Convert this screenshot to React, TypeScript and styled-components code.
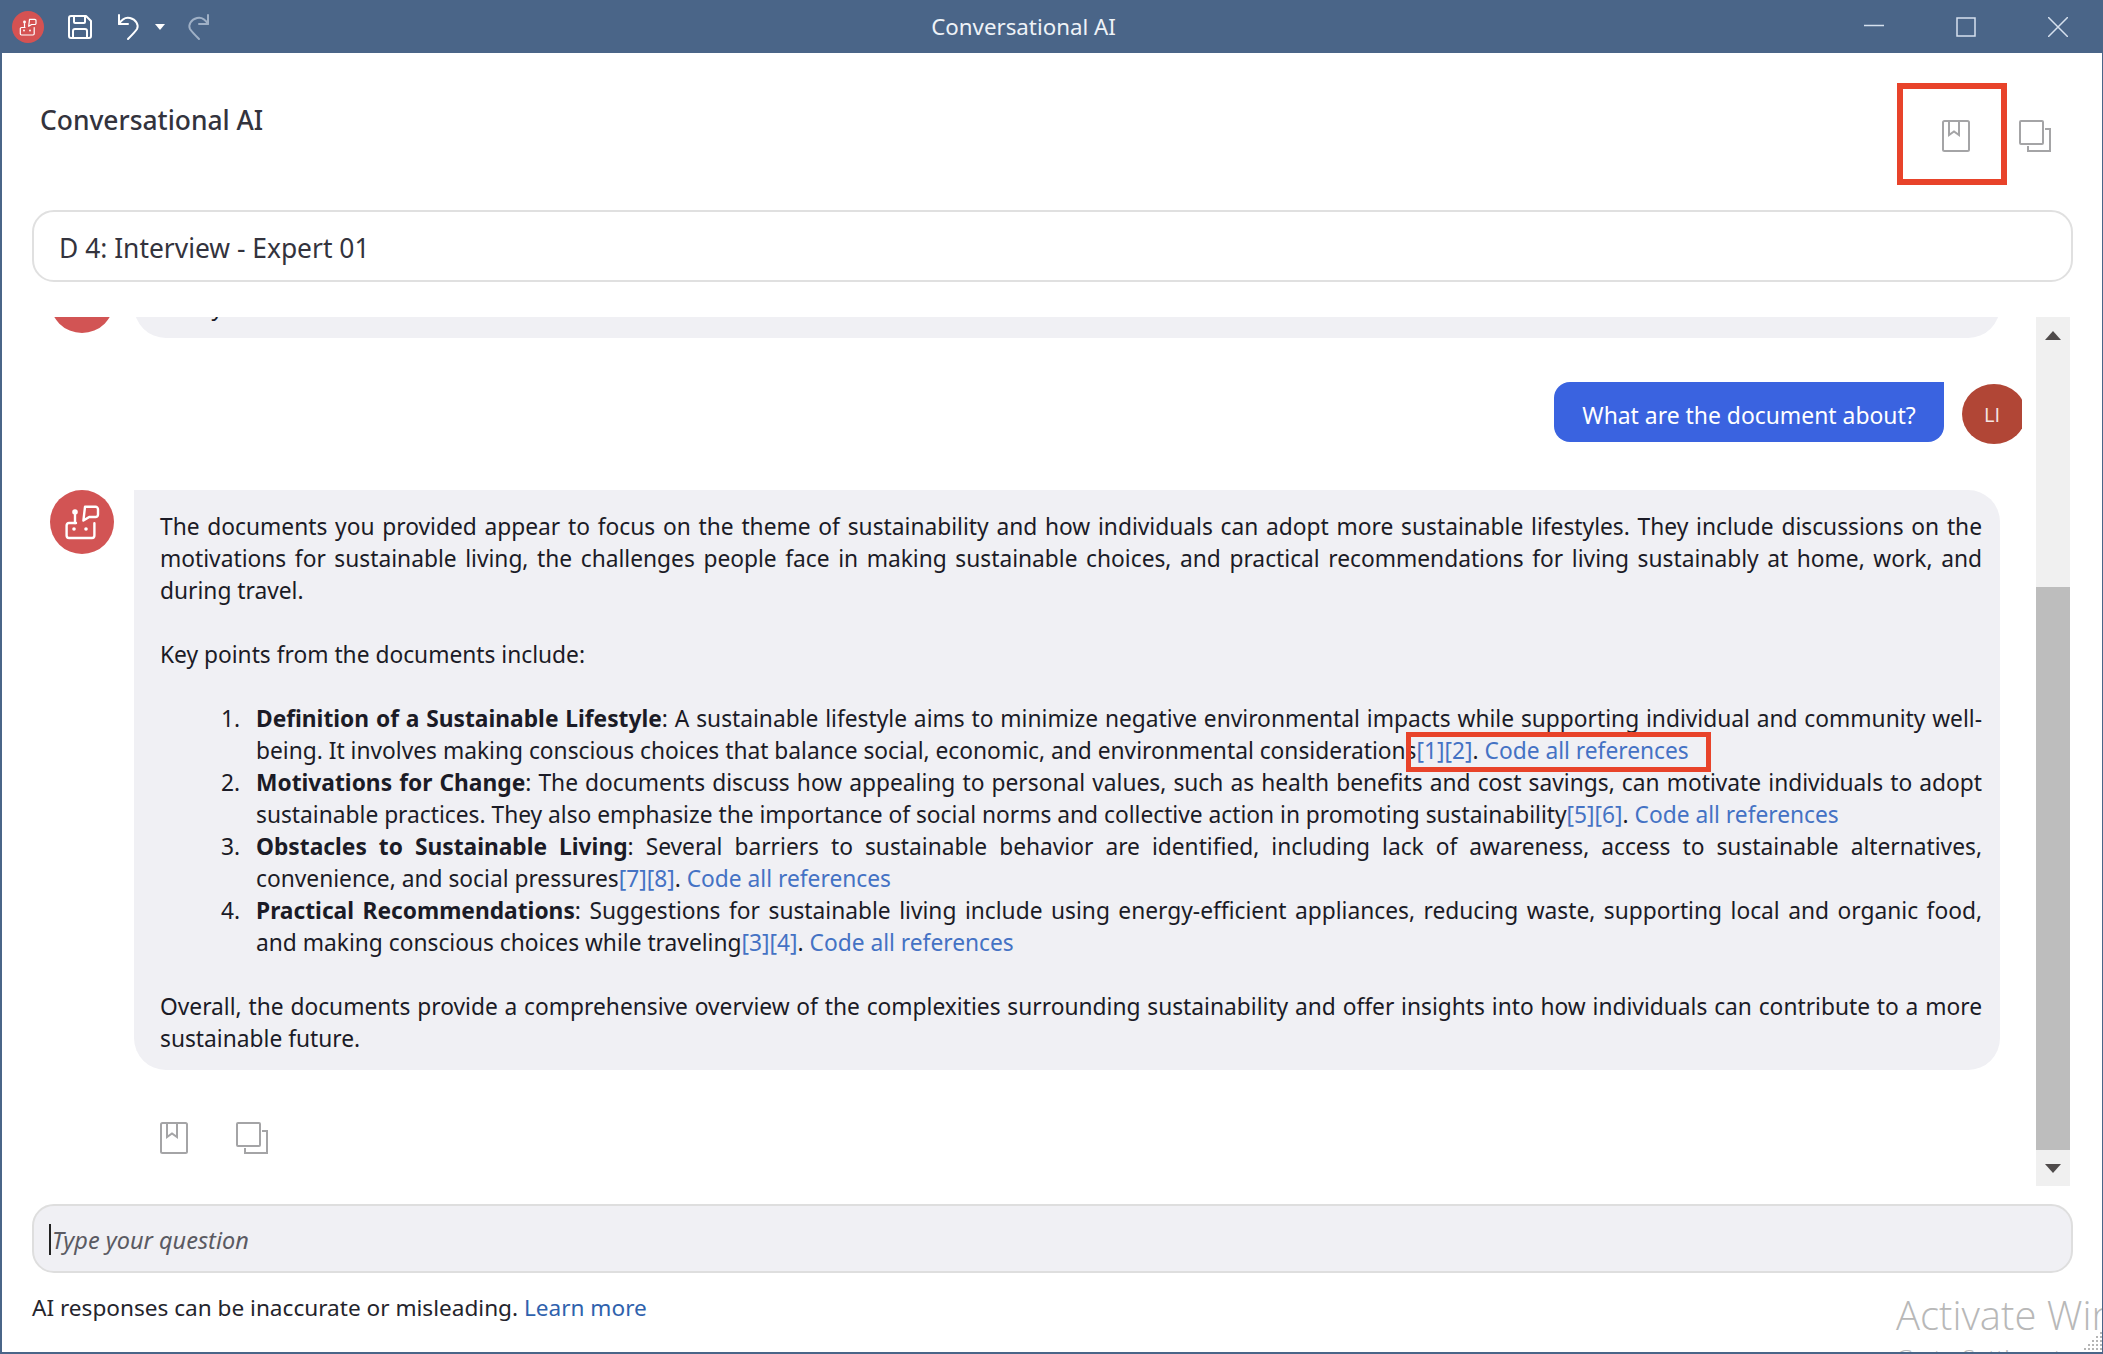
import * as React from 'react';
import styled, { createGlobalStyle } from 'styled-components';

const FONT = `'Noto Sans', 'Open Sans', sans-serif`;
const CHROME = '#4a6588';
const RED = '#e8432a';
const ICON_GREY = '#a4a4a6';

const GlobalStyle = createGlobalStyle`
  html, body { margin: 0; padding: 0; background: #fff; }
  body { font-family: ${FONT}; color: #1b1b26; }
`;

const Frame = styled.div`
  position: relative;
  width: 2103px;
  height: 1354px;
  box-sizing: border-box;
  border: 2px solid ${CHROME};
  border-top: 0;
  border-right-width: 1px;
  overflow: hidden;
  background: #fff;
  display: flex;
  flex-direction: column;
`;

const TitleBar = styled.header`
  height: 53px;
  flex: none;
  margin: 0 -1px 0 -2px;
  background: ${CHROME};
  display: grid;
  grid-template-columns: 1fr auto 1fr;
  align-items: center;
  color: #fff;
`;

const QuickTools = styled.div`
  display: flex;
  align-items: center;
  padding-left: 12px;
`;

const AppBadge = styled.div`
  width: 32px;
  height: 32px;
  border-radius: 50%;
  background: #d55252;
  margin-right: 23px;
`;

const WindowTitle = styled.div`
  font-size: 22.3px;
  color: #eef2f7;
  margin-right: 56px;
`;

const WindowControls = styled.div`
  display: flex;
  justify-content: flex-end;
  align-items: center;
  gap: 72px;
  padding-right: 35px;
`;

const ToolGap = styled.span`
  width: 24px;
`;

const Main = styled.main`
  flex: 1;
  min-height: 0;
  padding: 0 29px 0 30px;
  display: flex;
  flex-direction: column;
`;

const Header = styled.div`
  height: 157px;
  flex: none;
  display: flex;
  justify-content: space-between;
  align-items: flex-start;
`;

const Heading = styled.h1`
  margin: 47px 0 0 8px;
  font-size: 26.4px;
  line-height: 40px;
  font-weight: 500;
  color: #33333d;
`;

const HeaderActions = styled.div`
  display: flex;
  gap: 49px;
  margin: 67px 22px 0 0;
`;

const DocBox = styled.div`
  height: 72px;
  flex: none;
  box-sizing: border-box;
  border: 2px solid #e0e0e0;
  border-radius: 22px;
  padding: 3px 25px 0;
  display: flex;
  align-items: center;
  font-size: 26.4px;
  color: #33333d;
`;

const ChatArea = styled.div`
  height: 869px;
  flex: none;
  margin-top: 35px;
  display: flex;
  overflow: hidden;
`;

const Messages = styled.div`
  width: 2004px;
  flex: none;
  overflow: hidden;
`;

const BotRow = styled.div<{ $clipped?: boolean }>`
  display: flex;
  gap: 20px;
  padding-left: 18px;
  margin-top: ${({ $clipped }) => ($clipped ? '-48px' : '46px')};
`;

const Avatar = styled.div`
  width: 64px;
  height: 64px;
  flex: none;
  border-radius: 50%;
  background: #d25454;
`;

const BotBubble = styled.div<{ $clipped?: boolean }>`
  width: 1866px;
  box-sizing: border-box;
  height: ${({ $clipped }) => ($clipped ? '69px' : 'auto')};
  padding: ${({ $clipped }) => ($clipped ? '22px 18px 0 26px' : '21px 18px 15px 26px')};
  background: #f0f0f4;
  border-radius: 0 32px 32px 32px;
  font-size: 22.75px;
  line-height: 32px;
  color: #1b1b26;
`;

const Line = styled.div<{ $justify?: boolean }>`
  height: 32px;
  white-space: nowrap;
  text-align: justify;
  text-align-last: ${({ $justify }) => ($justify ? 'justify' : 'left')};
`;

const Gap = styled.div`
  height: 32px;
`;

const ListItem = styled.div`
  display: grid;
  grid-template-columns: 62px 1fr;
  padding-left: 34px;
`;

const Marker = styled.div`
  text-align: right;
  padding-right: 16px;
`;

const Ref = styled.span`
  color: #4472c4;
`;

const UserRow = styled.div`
  display: flex;
  justify-content: flex-end;
  gap: 18px;
  margin-top: 44px;
  padding-right: 14px;
`;

const UserBubble = styled.div`
  width: 390px;
  height: 60px;
  box-sizing: border-box;
  padding-top: 6px;
  background: #3a63e0;
  color: #fff;
  border-radius: 16px 0 16px 16px;
  font-size: 22.9px;
  display: flex;
  align-items: center;
  justify-content: center;
`;

const UserAvatarClip = styled.div`
  width: 60px;
  height: 60px;
  margin-top: 2px;
  overflow: hidden;
`;

const UserAvatar = styled.div`
  width: 64px;
  height: 60px;
  border-radius: 50%;
  background: #b14636;
  color: #f5e6e3;
  font-family: 'Open Sans', sans-serif;
  font-size: 20px;
  padding-right: 4px;
  box-sizing: border-box;
  display: flex;
  align-items: center;
  justify-content: center;
`;

const MessageActions = styled.div`
  display: flex;
  gap: 48px;
  margin: 52px 0 0 128px;
`;

const ScrollBar = styled.div`
  width: 34px;
  flex: none;
  background: #f0f0f0;
  display: flex;
  flex-direction: column;
`;

const ScrollButton = styled.div`
  height: 36px;
  flex: none;
  display: flex;
  align-items: center;
  justify-content: center;
`;

const ScrollSpace = styled.div`
  height: 234px;
  flex: none;
`;

const ScrollThumb = styled.div`
  flex: 1;
  background: #bdbdbd;
`;

const Arrow = styled.div<{ $down?: boolean }>`
  width: 0;
  height: 0;
  border-left: 8px solid transparent;
  border-right: 8px solid transparent;
  border-bottom: ${({ $down }) => ($down ? '0' : '9px solid #4f4b4b')};
  border-top: ${({ $down }) => ($down ? '9px solid #4f4b4b' : '0')};
`;

const InputBox = styled.div`
  height: 69px;
  flex: none;
  margin-top: 18px;
  box-sizing: border-box;
  background: #f0f0f4;
  border: 2px solid #dedede;
  border-radius: 22px;
  padding: 2px 0 0 15px;
  display: flex;
  align-items: center;
  font-size: 23.5px;
  font-style: italic;
  color: #5a5a62;
`;

const Caret = styled.span`
  width: 2px;
  height: 31px;
  background: #222;
  flex: none;
  margin-right: 1px;
`;

const Footer = styled.div`
  margin-top: 19px;
  font-size: 22.6px;
  line-height: 32px;
  color: #24242c;
`;

const FooterLink = styled.span`
  color: #2f62ad;
`;

const Annotation = styled.div<{ $x: number; $y: number; $w: number; $h: number; $t: number }>`
  position: absolute;
  left: ${({ $x }) => $x - 2}px;
  top: ${({ $y }) => $y}px;
  width: ${({ $w }) => $w}px;
  height: ${({ $h }) => $h}px;
  box-sizing: border-box;
  border: ${({ $t }) => $t}px solid ${RED};
  pointer-events: none;
`;

const Watermark = styled.div`
  position: absolute;
  left: 1894px;
  top: 1287px;
  width: 400px;
  color: #b8b8b8;
  font-family: 'Open Sans', sans-serif;
  font-weight: 300;
  font-size: 40px;
  line-height: 56px;
  white-space: nowrap;
`;

const WatermarkSub = styled.div`
  font-size: 24px;
  line-height: 30px;
`;

const Grip = styled.svg`
  position: absolute;
  right: 0;
  bottom: 0;
`;

const CaretGlyph = styled.svg`
  margin: 0 21px 0 14px;
`;

const MirrorSvg = styled.svg<{ $mirror?: boolean }>`
  transform: ${({ $mirror }) => ($mirror ? 'scaleX(-1)' : 'none')};
`;

function BotIcon({ size }: { size: number }) {
  return (
    <svg width={size} height={size} viewBox="0 0 32 32" fill="none" stroke="#fff" strokeWidth="1.2" strokeLinejoin="round" strokeLinecap="round">
      <path d="M13 16.5H9.5a1.2 1.2 0 0 0-1.2 1.2v5.1a1.2 1.2 0 0 0 1.2 1.2h11.5a1.2 1.2 0 0 0 1.2-1.2v-6.2" />
      <path d="M17.5 8.4h5.3a1.2 1.2 0 0 1 1.2 1.2v2.7a1.2 1.2 0 0 1-1.2 1.2h-3.2l-2.9 1.8z" />
      <path d="M12.5 12.5v4" />
      <circle cx="12.5" cy="11" r="0.8" fill="#fff" />
      <circle cx="12" cy="19.5" r="0.9" fill="#fff" stroke="none" />
      <circle cx="18" cy="19.5" r="0.9" fill="#fff" stroke="none" />
    </svg>
  );
}

function SaveIcon() {
  return (
    <svg width="26" height="26" viewBox="0 0 26 26" fill="none" stroke="#fff" strokeWidth="2" strokeLinejoin="round">
      <path d="M4 2h15l5 5v15a2 2 0 0 1-2 2H4a2 2 0 0 1-2-2V4a2 2 0 0 1 2-2z" />
      <path d="M7 2v6a1 1 0 0 0 1 1h9a1 1 0 0 0 1-1V2" />
      <path d="M6 24v-7a2 2 0 0 1 2-2h10a2 2 0 0 1 2 2v7" />
    </svg>
  );
}

function UndoIcon({ redo }: { redo?: boolean }) {
  return (
    <MirrorSvg
      $mirror={redo}
      width="24"
      height="28"
      viewBox="0 0 24 28"
      fill="none"
      stroke={redo ? '#9fb0c6' : '#fff'}
      strokeWidth="2"
      strokeLinecap="round"
      strokeLinejoin="round"
    >
      <path d="M2 2v9h9" />
      <path d="M2 11c3-5 7-7 11-6 6 1.500 9 7 7 11-2 3-6 7-9 10" />
    </MirrorSvg>
  );
}

function DropCaret() {
  return (
    <CaretGlyph width="10" height="6" viewBox="0 0 10 6">
      <path d="M0 0h10L5 6z" fill="#fff" />
    </CaretGlyph>
  );
}

function BookmarkIcon() {
  return (
    <svg width="28" height="32" viewBox="0 0 28 32" fill="none" stroke={ICON_GREY} strokeWidth="2">
      <rect x="1" y="1" width="26" height="30" rx="1.500" />
      <path d="M7 1v14l5-3.500 5 3.500V1" />
    </svg>
  );
}

function CopyIcon() {
  return (
    <svg width="32" height="32" viewBox="0 0 32 32" fill="none" stroke={ICON_GREY} strokeWidth="2">
      <rect x="1" y="1" width="23" height="23" rx="1" />
      <path d="M26 9h5v22H9v-5" />
    </svg>
  );
}

function MinimizeIcon() {
  return (
    <svg width="20" height="20" viewBox="0 0 20 20" stroke="#d6e0ee" strokeWidth="1.500">
      <path d="M0 8.500h20" />
    </svg>
  );
}

function MaximizeIcon() {
  return (
    <svg width="20" height="20" viewBox="0 0 20 20" fill="none" stroke="#d6e0ee" strokeWidth="1.500">
      <rect x="1" y="1" width="18" height="18" />
    </svg>
  );
}

function CloseIcon() {
  return (
    <svg width="20" height="20" viewBox="0 0 20 20" stroke="#d6e0ee" strokeWidth="1.500">
      <path d="M0 0l20 20M20 0L0 20" />
    </svg>
  );
}

const CODE_ALL = 'Code all references';

const LIST = [
  {
    lines: [
      <Line $justify key="a">
        <b>Definition of a Sustainable Lifestyle</b>: A sustainable lifestyle aims to minimize negative environmental impacts while supporting individual and community well-
      </Line>,
      <Line key="b">
        being. It involves making conscious choices that balance social, economic, and environmental considerations<Ref>[1][2]</Ref>. <Ref>{CODE_ALL}</Ref>
      </Line>,
    ],
  },
  {
    lines: [
      <Line $justify key="a">
        <b>Motivations for Change</b>: The documents discuss how appealing to personal values, such as health benefits and cost savings, can motivate individuals to adopt
      </Line>,
      <Line key="b">
        sustainable practices. They also emphasize the importance of social norms and collective action in promoting sustainability<Ref>[5][6]</Ref>. <Ref>{CODE_ALL}</Ref>
      </Line>,
    ],
  },
  {
    lines: [
      <Line $justify key="a">
        <b>Obstacles to Sustainable Living</b>: Several barriers to sustainable behavior are identified, including lack of awareness, access to sustainable alternatives,
      </Line>,
      <Line key="b">
        convenience, and social pressures<Ref>[7][8]</Ref>. <Ref>{CODE_ALL}</Ref>
      </Line>,
    ],
  },
  {
    lines: [
      <Line $justify key="a">
        <b>Practical Recommendations</b>: Suggestions for sustainable living include using energy-efficient appliances, reducing waste, supporting local and organic food,
      </Line>,
      <Line key="b">
        and making conscious choices while traveling<Ref>[3][4]</Ref>. <Ref>{CODE_ALL}</Ref>
      </Line>,
    ],
  },
];

export default function App() {
  return (
    <Frame>
      <GlobalStyle />
      <TitleBar>
        <QuickTools>
          <AppBadge>
            <BotIcon size={32} />
          </AppBadge>
          <SaveIcon />
          <ToolGap />
          <UndoIcon />
          <DropCaret />
          <UndoIcon redo />
        </QuickTools>
        <WindowTitle>Conversational AI</WindowTitle>
        <WindowControls>
          <MinimizeIcon />
          <MaximizeIcon />
          <CloseIcon />
        </WindowControls>
      </TitleBar>

      <Main>
        <Header>
          <Heading>Conversational AI</Heading>
          <HeaderActions>
            <BookmarkIcon />
            <CopyIcon />
          </HeaderActions>
        </Header>
        <DocBox>D 4: Interview - Expert 01</DocBox>

        <ChatArea>
          <Messages>
            <BotRow $clipped>
              <Avatar />
              <BotBubble $clipped>
                <Line>Today</Line>
              </BotBubble>
            </BotRow>

            <UserRow>
              <UserBubble>What are the document about?</UserBubble>
              <UserAvatarClip>
                <UserAvatar>LI</UserAvatar>
              </UserAvatarClip>
            </UserRow>

            <BotRow>
              <Avatar>
                <BotIcon size={64} />
              </Avatar>
              <BotBubble>
                <Line $justify>The documents you provided appear to focus on the theme of sustainability and how individuals can adopt more sustainable lifestyles. They include discussions on the</Line>
                <Line $justify>motivations for sustainable living, the challenges people face in making sustainable choices, and practical recommendations for living sustainably at home, work, and</Line>
                <Line>during travel.</Line>
                <Gap />
                <Line>Key points from the documents include:</Line>
                <Gap />
                {LIST.map((item, i) => (
                  <ListItem key={i}>
                    <Marker>{i + 1}.</Marker>
                    <div>{item.lines}</div>
                  </ListItem>
                ))}
                <Gap />
                <Line $justify>Overall, the documents provide a comprehensive overview of the complexities surrounding sustainability and offer insights into how individuals can contribute to a more</Line>
                <Line>sustainable future.</Line>
              </BotBubble>
            </BotRow>

            <MessageActions>
              <BookmarkIcon />
              <CopyIcon />
            </MessageActions>
          </Messages>

          <ScrollBar>
            <ScrollButton>
              <Arrow />
            </ScrollButton>
            <ScrollSpace />
            <ScrollThumb />
            <ScrollButton>
              <Arrow $down />
            </ScrollButton>
          </ScrollBar>
        </ChatArea>

        <InputBox>
          <Caret />
          Type your question
        </InputBox>
        <Footer>
          AI responses can be inaccurate or misleading. <FooterLink>Learn more</FooterLink>
        </Footer>
      </Main>

      <Watermark>
        Activate Windows
        <WatermarkSub>Go to Settings to activate Windows.</WatermarkSub>
      </Watermark>
      <Grip width="22" height="22" viewBox="0 0 22 22" fill="#b5b5b5">
        {[0, 1, 2, 3, 4].flatMap((row) =>
          Array.from({ length: row + 1 }, (_, col) => (
            <rect key={`${row}-${col}`} x={20 - col * 4} y={2 + row * 4} width="2" height="2" />
          ))
        )}
      </Grip>

      <Annotation $x={1897} $y={83} $w={110} $h={102} $t={6} />
      <Annotation $x={1406} $y={732} $w={305} $h={40} $t={5} />
    </Frame>
  );
}
